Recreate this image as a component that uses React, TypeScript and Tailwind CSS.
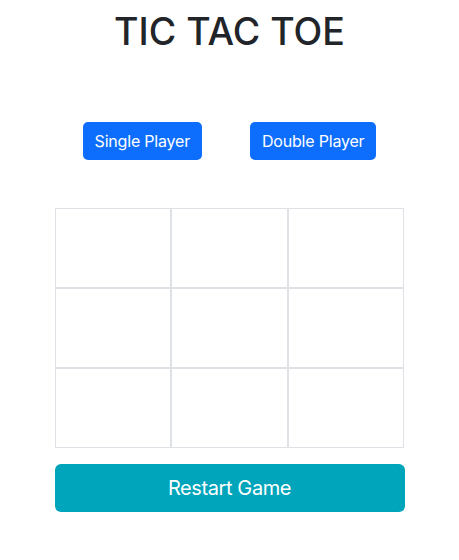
import { useState } from "react";

export default function App() {
  const [cells, setCells] = useState<string[]>(Array(9).fill(""));

  return (
    <div className="min-h-[560px] bg-white font-['Inter','Noto_Sans',sans-serif] text-[#212529]">
      {/* Title */}
      <h1 className="pt-2 text-center text-[37.5px] font-medium leading-[48px]">TIC TAC TOE</h1>

      {/* Mode buttons */}
      <div className="mt-[66px] flex justify-center gap-12">
        <button className="h-[38px] rounded-[5px] bg-[#0d6efd] px-3 text-base tracking-[-0.2px] text-white">Single Player</button>
        <button className="h-[38px] rounded-[5px] bg-[#0d6efd] px-3 text-base tracking-[-0.2px] text-white">Double Player</button>
      </div>

      {/* Board */}
      <div className="mx-auto mt-[48px] grid w-[350px] grid-cols-3">
        {cells.map((c, i) => (
          <div
            key={i}
            onClick={() => setCells(cells.map((v, j) => (j === i && !v ? "X" : v)))}
            className="flex h-20 items-center justify-center border border-[#dee2e6] text-4xl"
          >
            {c}
          </div>
        ))}
      </div>

      {/* Restart */}
      <div className="mx-auto mt-4 w-[350px]">
        <button
          onClick={() => setCells(Array(9).fill(""))}
          className="h-12 w-full rounded-[6px] bg-[#00a5bb] text-xl tracking-[-0.4px] text-white"
        >
          Restart Game
        </button>
      </div>
    </div>
  );
}
